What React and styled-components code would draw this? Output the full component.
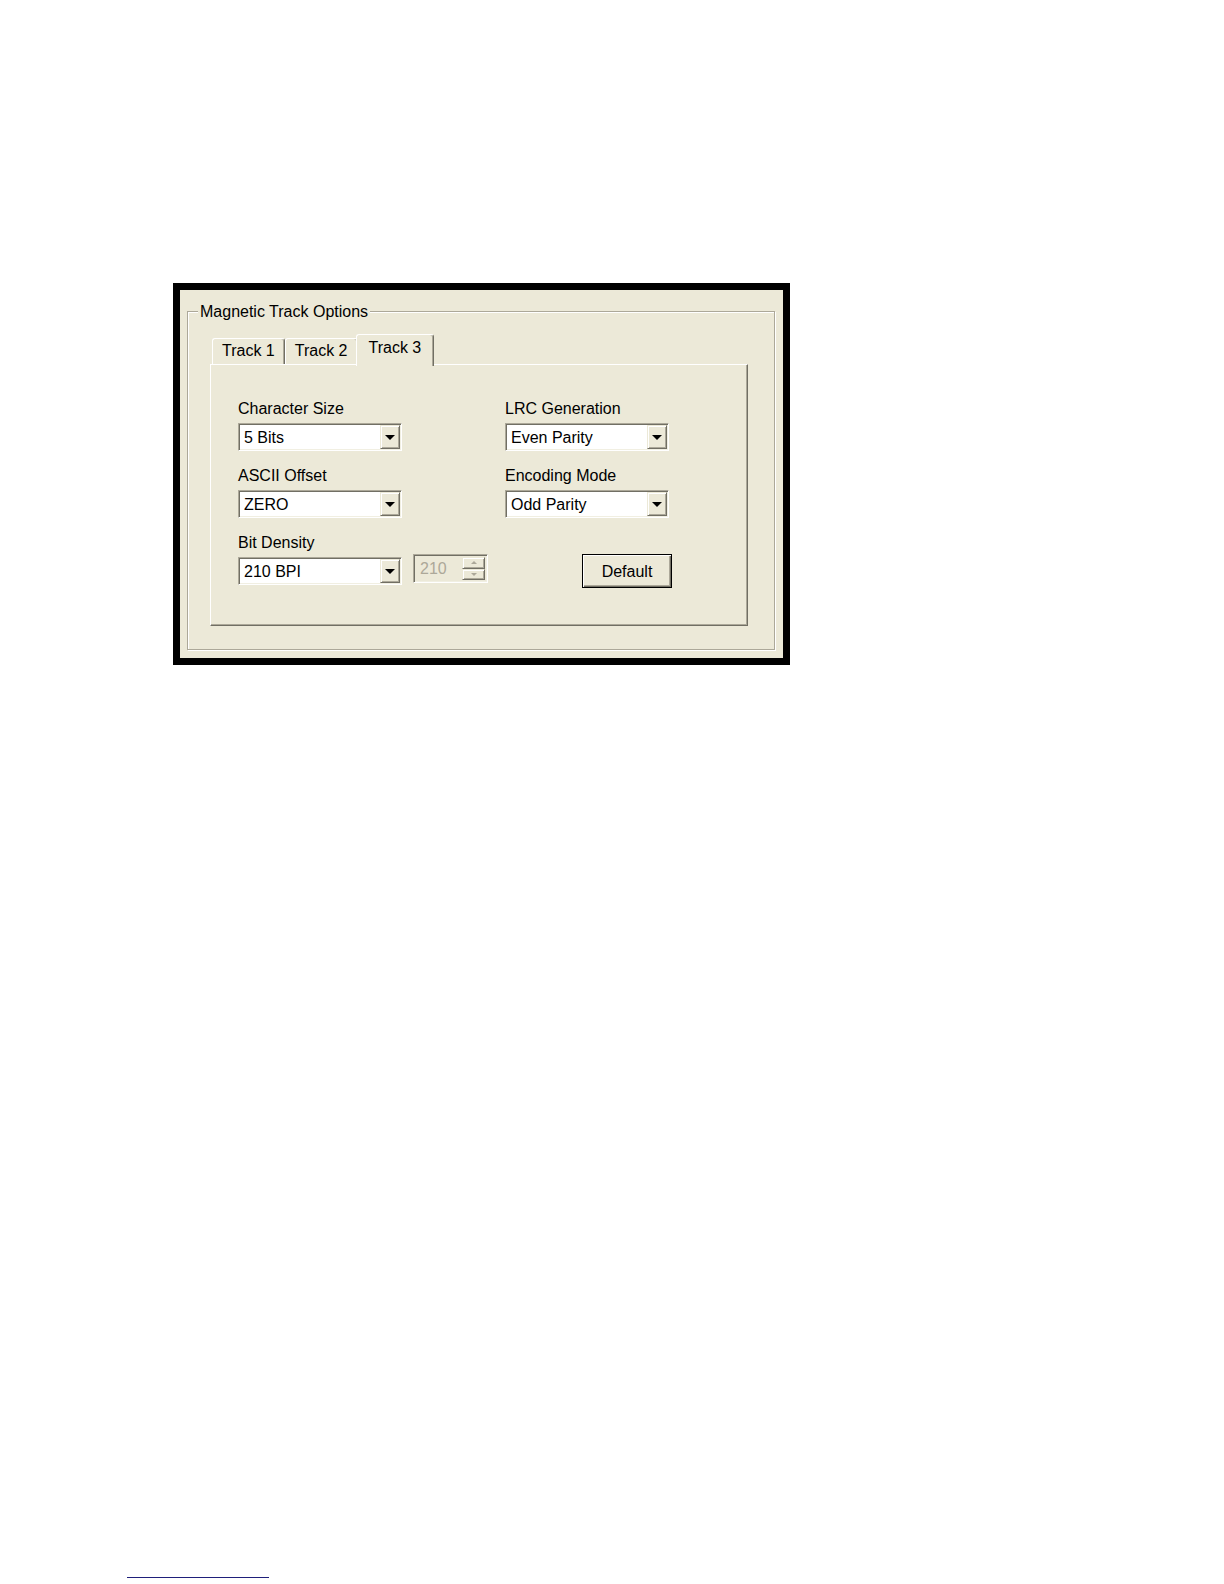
import React from "react";
import styled, { createGlobalStyle } from "styled-components";

const face = "#ECE9D8";
const shadow = "#ACA899";
const darkShadow = "#716F64";

const rows = [
  { left: { label: "Character Size", value: "5 Bits" }, right: { label: "LRC Generation", value: "Even Parity" } },
  { left: { label: "ASCII Offset", value: "ZERO" }, right: { label: "Encoding Mode", value: "Odd Parity" } },
];

const tabs = ["Track 1", "Track 2", "Track 3"];

const Combo = ({ value }) => (
  <StCombo>
    <span className="val">{value}</span>
    <StDropBtn>
      <StArrow />
    </StDropBtn>
  </StCombo>
);

const App = () => {
  const active = 2;
  return (
    <>
      <GlobalStyle />
      <StPage>
        <StFrame>
          <StGroupBox>
            <StCaption>Magnetic Track Options</StCaption>
            <StTabRow>
              {tabs.map((t, idx) => (
                <StTab key={t} $active={idx === active}>
                  {t}
                </StTab>
              ))}
            </StTabRow>
            <StPanel>
              {rows.map((r) => (
                <React.Fragment key={r.left.label}>
                  <StField>
                    <StLabel>{r.left.label}</StLabel>
                    <Combo value={r.left.value} />
                  </StField>
                  <StField>
                    <StLabel>{r.right.label}</StLabel>
                    <Combo value={r.right.value} />
                  </StField>
                </React.Fragment>
              ))}
              <StField>
                <StLabel>Bit Density</StLabel>
                <div className="inline">
                  <Combo value="210 BPI" />
                  <StSpin>
                    <span className="val">210</span>
                    <div className="btns">
                      <StSpinBtn>
                        <StSmallArrow $up />
                      </StSpinBtn>
                      <StSpinBtn>
                        <StSmallArrow />
                      </StSpinBtn>
                    </div>
                  </StSpin>
                </div>
              </StField>
              <StField>
                <StLabel />
                <StButton>Default</StButton>
              </StField>
            </StPanel>
          </StGroupBox>
        </StFrame>
        <StFootLine />
      </StPage>
    </>
  );
};
export default App;

const GlobalStyle = createGlobalStyle`
  html, body {
    margin: 0;
    padding: 0;
    background: #ffffff;
  }
  body {
    font-family: "Liberation Sans", Arial, sans-serif;
    font-size: 16px;
    color: #000;
  }
  * {
    box-sizing: border-box;
  }
`;

const StPage = styled.div`
  width: 1224px;
  min-height: 1584px;
  padding-top: 283px;
`;

const StFrame = styled.div`
  width: 617px;
  margin-left: 173px;
  border: 7px solid #000;
  background: ${face};
  padding: 21px 8px 8px 7px;
`;

const StGroupBox = styled.div`
  border: 1px solid ${shadow};
  box-shadow: inset 1px 1px 0 #fff, 1px 1px 0 #fff;
  padding: 0 26px 23px 22px;
`;

const StCaption = styled.div`
  display: table;
  margin: -10px 0 12px -12px;
  padding: 0 2px;
  height: 20px;
  line-height: 20px;
  background: ${face};
  white-space: nowrap;
`;

const StTabRow = styled.div`
  display: flex;
  align-items: flex-end;
  height: 30px;
  padding-left: 2px;
`;

const StTab = styled.div`
  position: relative;
  z-index: ${({ $active }) => ($active ? 2 : 0)};
  height: ${({ $active }) => ($active ? "32px" : "26px")};
  margin: ${({ $active }) => ($active ? "0 -2px -2px -2px" : "0")};
  padding: ${({ $active }) => ($active ? "0 12px 0 12px" : "0 9px")};
  line-height: ${({ $active }) => ($active ? "25px" : "24px")};
  background: ${face};
  border-top: 1px solid #fff;
  border-left: 1px solid #fff;
  border-right: 1px solid ${darkShadow};
  box-shadow: inset -1px 0 0 ${shadow};
  border-radius: 3px 3px 0 0;
  white-space: nowrap;
`;

const StPanel = styled.div`
  position: relative;
  z-index: 1;
  display: grid;
  grid-template-columns: 267px 1fr;
  row-gap: 16px;
  padding: 35px 0 37px 27px;
  background: ${face};
  border-top: 1px solid #fff;
  border-left: 1px solid #fff;
  border-right: 1px solid ${darkShadow};
  border-bottom: 1px solid ${darkShadow};
  box-shadow: inset -1px -1px 0 ${shadow};

  .inline {
    display: flex;
    align-items: flex-start;
    gap: 11px;
  }
`;

const StField = styled.div`
  display: flex;
  flex-direction: column;
  align-items: flex-start;
  gap: 5px;
`;

const StLabel = styled.div`
  height: 18px;
  line-height: 18px;
  white-space: nowrap;
`;

const StCombo = styled.div`
  display: flex;
  align-items: stretch;
  width: 164px;
  height: 28px;
  background: #fff;
  border: 1px solid;
  border-color: ${shadow} #fff #fff ${shadow};
  box-shadow: inset 1px 1px 0 ${darkShadow}, inset -1px -1px 0 #f1efe2;
  padding: 1px;

  .val {
    flex: 1;
    padding: 1px 0 0 4px;
    line-height: 24px;
    white-space: nowrap;
  }
`;

const StDropBtn = styled.div`
  display: flex;
  align-items: center;
  justify-content: center;
  width: 20px;
  background: ${face};
  border: 1px solid;
  border-color: ${face} ${darkShadow} ${darkShadow} ${face};
  box-shadow: inset 1px 1px 0 #fff, inset -1px -1px 0 ${shadow};
`;

const StArrow = styled.div`
  width: 0;
  height: 0;
  border-left: 5px solid transparent;
  border-right: 5px solid transparent;
  border-top: 5px solid #000;
  margin-top: 1px;
`;

const StSpin = styled.div`
  display: flex;
  align-items: stretch;
  width: 75px;
  height: 29px;
  margin-top: -3px;
  background: ${face};
  border: 1px solid;
  border-color: ${shadow} #fff #fff ${shadow};
  box-shadow: inset 1px 1px 0 ${darkShadow}, inset -1px -1px 0 #f1efe2;
  padding: 2px;

  .val {
    flex: 1;
    padding-left: 4px;
    line-height: 23px;
    color: ${shadow};
  }
  .btns {
    display: flex;
    flex-direction: column;
    width: 23px;
  }
`;

const StSpinBtn = styled.div`
  flex: 1;
  display: flex;
  align-items: center;
  justify-content: center;
  background: ${face};
  border: 1px solid;
  border-color: ${face} ${darkShadow} ${darkShadow} ${face};
  box-shadow: inset 1px 1px 0 #fff, inset -1px -1px 0 ${shadow};
`;

const StSmallArrow = styled.div`
  width: 0;
  height: 0;
  border-left: 3px solid transparent;
  border-right: 3px solid transparent;
  ${({ $up }) =>
    $up ? `border-bottom: 3px solid ${shadow};` : `border-top: 3px solid ${shadow};`}
`;

const StButton = styled.div`
  width: 90px;
  height: 34px;
  margin: -3px 0 0 77px;
  display: flex;
  align-items: center;
  justify-content: center;
  background: ${face};
  border: 1px solid #000;
  box-shadow: inset 1px 1px 0 #fff, inset -1px -1px 0 ${darkShadow},
    inset -2px -2px 0 ${shadow};
  padding-top: 1px;
`;

const StFootLine = styled.div`
  width: 142px;
  height: 1px;
  margin: 912px 0 0 127px;
  background: #1f1f7a;
`;
